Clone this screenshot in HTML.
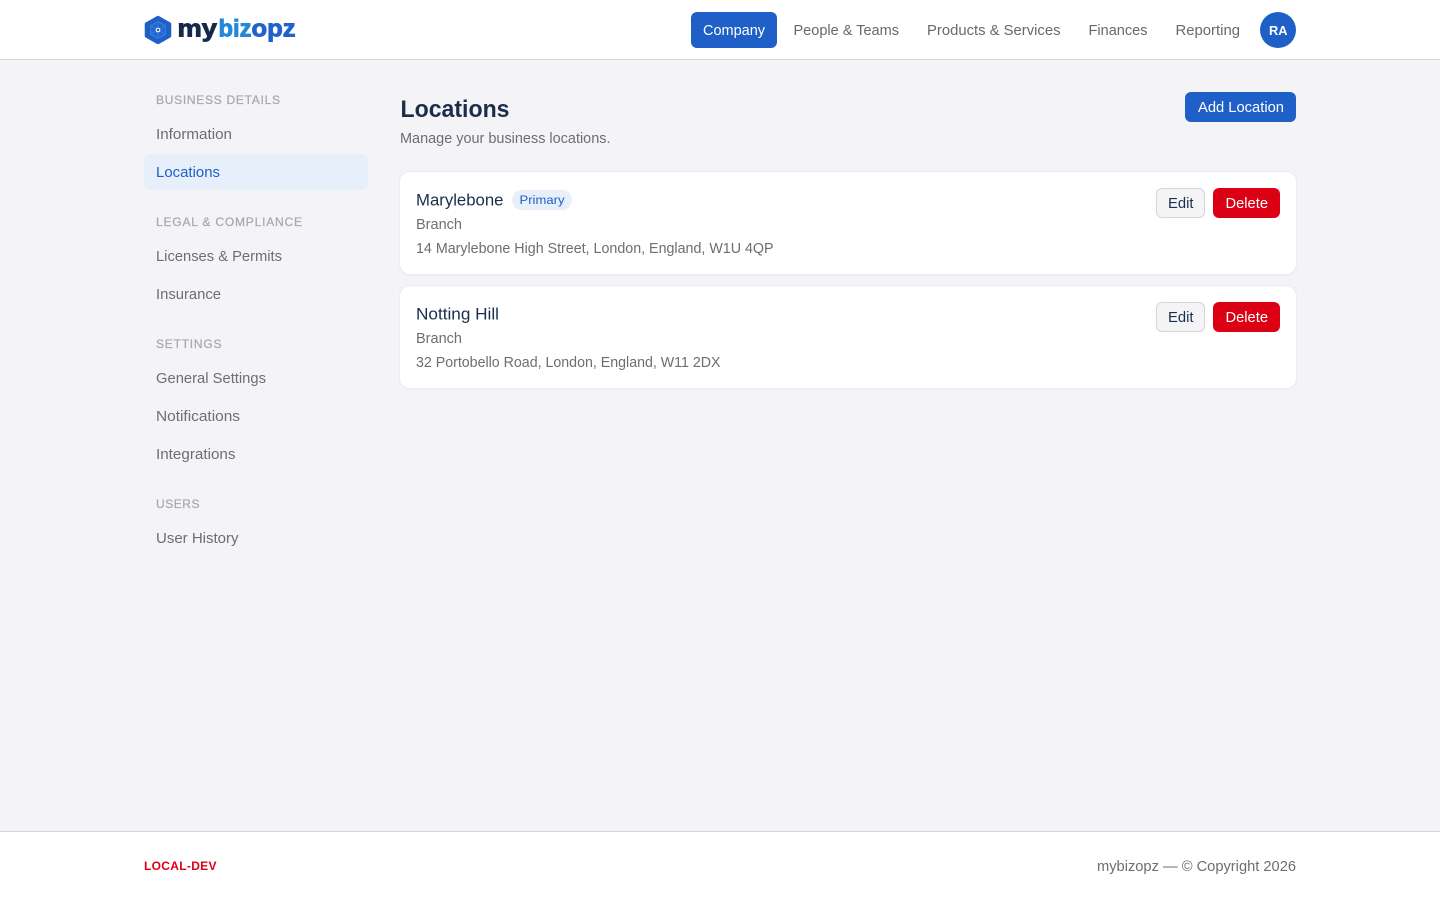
<!DOCTYPE html>
<html lang="en">
<head>
<meta charset="utf-8">
<title>Locations - mybizopz</title>
<style>
html,body{margin:0;padding:0;width:1440px;height:900px;overflow:hidden;background:#f4f4f7;font-family:"Liberation Sans",sans-serif}
.b{position:absolute;box-sizing:border-box}
#t{position:absolute;left:0;top:0;z-index:5}
text{font-family:"Liberation Sans",sans-serif;font-size:14.4px;fill:#6b6e73}
.nav{fill:#66696e}
.h{font-size:12px;fill:#a7a9ad;stroke:#a7a9ad;stroke-width:.25}
.name{font-size:16.2px;fill:#1a2e4c}
.w{fill:#fff}
</style>
</head>
<body>
<div class="b" style="left:0;top:0;width:1440px;height:60px;background:#fff;border-bottom:1px solid #d5d6da"></div>
<div class="b" style="left:691px;top:12px;width:86px;height:36px;background:#1e5fc8;border-radius:6px"></div>
<div class="b" style="left:1260px;top:12px;width:36px;height:36px;background:#1e5fc8;border-radius:50%"></div>
<div class="b" style="left:144px;top:154px;width:224px;height:36px;background:#e7effb;border-radius:6px"></div>
<div class="b" style="left:1185px;top:92px;width:111px;height:30px;background:#1e5fc8;border-radius:6px"></div>
<div class="b" style="left:400px;top:172px;width:896px;height:102px;background:#fff;border-radius:10px;box-shadow:0 0 0 1px #ebecef,0 1px 2px rgba(0,0,0,.05)"></div>
<div class="b" style="left:400px;top:286px;width:896px;height:102px;background:#fff;border-radius:10px;box-shadow:0 0 0 1px #ebecef,0 1px 2px rgba(0,0,0,.05)"></div>
<div class="b" style="left:512px;top:190px;width:60px;height:20px;background:#e7effb;border-radius:10px"></div>
<div class="b" style="left:1156px;top:188px;width:49px;height:30px;background:#f4f4f7;border:1px solid #d5d6da;border-radius:6px"></div>
<div class="b" style="left:1213px;top:188px;width:67px;height:30px;background:#dc0014;border-radius:6px"></div>
<div class="b" style="left:1156px;top:302px;width:49px;height:30px;background:#f4f4f7;border:1px solid #d5d6da;border-radius:6px"></div>
<div class="b" style="left:1213px;top:302px;width:67px;height:30px;background:#dc0014;border-radius:6px"></div>
<div class="b" style="left:0;top:831px;width:1440px;height:69px;background:#fff;border-top:1px solid #d5d6da"></div>

<svg id="t" width="1440" height="900" viewBox="0 0 1440 900" xmlns="http://www.w3.org/2000/svg">
  <path d="M158 17.500 169.500 24V36L158 42.500 146.500 36V24Z" fill="#1e5fc8" stroke="#1e5fc8" stroke-width="3.500" stroke-linejoin="round"/>
  <path d="M158 21.500 165.500 25.700V34.300L158 38.500 150.500 34.300V25.700Z" fill="#2468cf" stroke="#3f7fd9" stroke-width=".9"/>
  <path d="M158 21.500V27M165.500 25.700 160.300 28.700M165.500 34.300 160.300 31.300M158 38.500V33M150.500 34.300 155.700 31.300M150.500 25.700 155.700 28.700" stroke="#3f7fd9" stroke-width=".7" fill="none"/>
  <circle cx="158" cy="30" r="1.800" fill="#1e5fc8" stroke="#e6effc" stroke-width="1.200"/>

  <text x="177.500" y="36.500" textLength="39.500" lengthAdjust="spacingAndGlyphs" style="font-size:24px;font-weight:700;fill:#17294a;stroke:#17294a;stroke-width:.9">my</text>
  <text x="218.500" y="36.500" textLength="33" lengthAdjust="spacingAndGlyphs" style="font-size:24px;font-weight:700;fill:#2488d8;stroke:#2488d8;stroke-width:.9">biz</text>
  <text x="251.500" y="36.500" textLength="44" lengthAdjust="spacingAndGlyphs" style="font-size:24px;font-weight:700;fill:#1e62ca;stroke:#1e62ca;stroke-width:.9">opz</text>

  <text class="w" x="703" y="35" textLength="62" lengthAdjust="spacingAndGlyphs">Company</text>
  <text class="nav" x="793.500" y="35" textLength="105.500" lengthAdjust="spacingAndGlyphs">People &amp; Teams</text>
  <text class="nav" x="927" y="35" textLength="133.500" lengthAdjust="spacingAndGlyphs">Products &amp; Services</text>
  <text class="nav" x="1088.500" y="35" textLength="59" lengthAdjust="spacingAndGlyphs">Finances</text>
  <text class="nav" x="1175.500" y="35" textLength="64.500" lengthAdjust="spacingAndGlyphs">Reporting</text>
  <text class="w" x="1269" y="35" textLength="18.500" lengthAdjust="spacingAndGlyphs" style="font-weight:700;font-size:13px">RA</text>

  <text class="h" x="156" y="104" textLength="124">BUSINESS DETAILS</text>
  <text x="156" y="139" textLength="76" lengthAdjust="spacingAndGlyphs">Information</text>
  <text x="156" y="177" textLength="64" lengthAdjust="spacingAndGlyphs" style="fill:#1e5fc8">Locations</text>
  <text class="h" x="156" y="226" textLength="146">LEGAL &amp; COMPLIANCE</text>
  <text x="156" y="261" textLength="126" lengthAdjust="spacingAndGlyphs">Licenses &amp; Permits</text>
  <text x="156" y="299" textLength="65" lengthAdjust="spacingAndGlyphs">Insurance</text>
  <text class="h" x="156" y="348" textLength="65.500">SETTINGS</text>
  <text x="156" y="383" textLength="110" lengthAdjust="spacingAndGlyphs">General Settings</text>
  <text x="156" y="421" textLength="84" lengthAdjust="spacingAndGlyphs">Notifications</text>
  <text x="156" y="459" textLength="79.500" lengthAdjust="spacingAndGlyphs">Integrations</text>
  <text class="h" x="156" y="508" textLength="43.500">USERS</text>
  <text x="156" y="543" textLength="82.500" lengthAdjust="spacingAndGlyphs">User History</text>

  <text x="400.500" y="117" textLength="109" lengthAdjust="spacingAndGlyphs" style="font-size:24px;font-weight:700;fill:#1a2e4c">Locations</text>
  <text x="400" y="143" textLength="210.500" lengthAdjust="spacingAndGlyphs">Manage your business locations.</text>
  <text class="w" x="1198" y="112" textLength="86" lengthAdjust="spacingAndGlyphs">Add Location</text>

  <text class="name" x="416" y="205.500" textLength="87.500" lengthAdjust="spacingAndGlyphs">Marylebone</text>
  <text x="519.500" y="204" textLength="45" lengthAdjust="spacingAndGlyphs" style="font-size:12.400px;fill:#1e5fc8">Primary</text>
  <text x="416" y="229" textLength="46" lengthAdjust="spacingAndGlyphs">Branch</text>
  <text x="416" y="253" textLength="357.500" lengthAdjust="spacingAndGlyphs">14 Marylebone High Street, London, England, W1U 4QP</text>
  <text x="1168" y="208" textLength="25.500" lengthAdjust="spacingAndGlyphs" style="fill:#1a2e4c">Edit</text>
  <text class="w" x="1225.500" y="208" textLength="42.500" lengthAdjust="spacingAndGlyphs">Delete</text>

  <text class="name" x="416" y="319.500" textLength="83" lengthAdjust="spacingAndGlyphs">Notting Hill</text>
  <text x="416" y="343" textLength="46" lengthAdjust="spacingAndGlyphs">Branch</text>
  <text x="416" y="367" textLength="304.500" lengthAdjust="spacingAndGlyphs">32 Portobello Road, London, England, W11 2DX</text>
  <text x="1168" y="322" textLength="25.500" lengthAdjust="spacingAndGlyphs" style="fill:#1a2e4c">Edit</text>
  <text class="w" x="1225.500" y="322" textLength="42.500" lengthAdjust="spacingAndGlyphs">Delete</text>

  <text x="144" y="870" textLength="72.500" style="font-size:12px;font-weight:700;fill:#dc0014">LOCAL-DEV</text>
  <text x="1097" y="871" textLength="199" lengthAdjust="spacingAndGlyphs">mybizopz — © Copyright 2026</text>
</svg>
</body>
</html>
